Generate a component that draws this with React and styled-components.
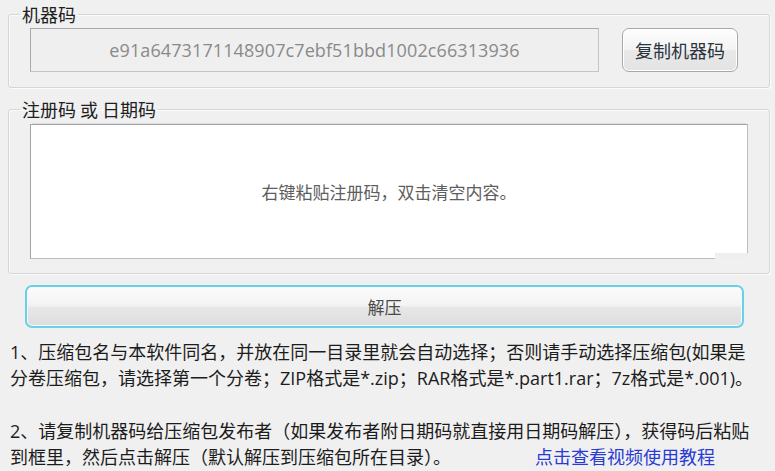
import React from "react";
import styled, { createGlobalStyle } from "styled-components";

const GlobalStyle = createGlobalStyle`
  html, body {
    margin: 0;
    padding: 0;
    background: #f0f0f0;
  }
  body {
    font-family: "Open Sans", "Noto Sans CJK SC", sans-serif;
    color: #1e1e1e;
  }
`;

const Page = styled.div`
  width: 775px;
  height: 471px;
  overflow: hidden;
  padding-top: 4px;
  box-sizing: border-box;
`;

const Group = styled.fieldset`
  margin: ${({ $top }) => $top || 0}px 5px 0 8px;
  padding: ${({ $pt }) => $pt}px 0 ${({ $pb }) => $pb}px 0;
  border: 1px solid #d4d6d8;
  border-radius: 3px;
  box-shadow: inset 1px 1px 0 #fbfbfb, 1px 1px 0 #fbfbfb;
  min-width: 0;
`;

const Legend = styled.legend`
  margin-left: 11px;
  padding: 0 2px;
  font-family: "Noto Sans CJK SC", sans-serif;
  font-size: 18px;
  line-height: 20px;
  color: #202020;
`;

const GroupBody = styled.div`
  padding-left: 21px;
`;

const CodeRow = styled.div`
  display: flex;
  align-items: center;
  gap: 23px;
`;

const CodeField = styled.div`
  width: 569px;
  height: 44px;
  box-sizing: border-box;
  border: 1px solid #a9a9a9;
  border-right-color: #c4c4c4;
  border-bottom-color: #c4c4c4;
  background: #efefef;
  display: flex;
  align-items: center;
  justify-content: center;
  font-family: "Open Sans", sans-serif;
  font-size: 18px;
  color: #8a8a8a;
  letter-spacing: 0.1px;
`;

const CopyButton = styled.button`
  width: 116px;
  height: 44px;
  border: 1px solid #a9a9a9;
  border-radius: 7px;
  background: linear-gradient(#fdfdfd 0%, #f3f3f3 50%, #e9e9e9 51%, #e3e3e3 100%);
  box-shadow: inset 0 0 0 1px #ffffff;
  font-family: "Noto Sans CJK SC", sans-serif;
  font-size: 18px;
  color: #2c3340;
  padding: 0;
`;

const PasteBox = styled.div`
  position: relative;
  width: 718px;
  height: 135px;
  box-sizing: border-box;
  background: #ffffff;
  border: 1px solid #a4a4a4;
  border-right-color: #bdbdbd;
  border-bottom-color: #bdbdbd;
  box-shadow: 0 -3px 0 -2px #d9dde0;
  display: flex;
  align-items: center;
  justify-content: center;
  font-family: "Noto Sans CJK SC", sans-serif;
  font-size: 17px;
  color: #5e5e5e;
`;

const Grip = styled.span`
  position: absolute;
  right: -1px;
  bottom: -1px;
  width: 33px;
  height: 6px;
  background: #efefef;
`;

const UnpackButton = styled.button`
  display: block;
  margin: 11px 0 0 25px;
  width: 719px;
  height: 43px;
  border: 2px solid #6ccfe8;
  border-radius: 7px;
  background: linear-gradient(#fbfbfb 0%, #f3f3f3 48%, #e7e7e7 52%, #dedede 100%);
  box-shadow: inset 0 0 0 1px #f7fdff;
  font-family: "Noto Sans CJK SC", sans-serif;
  font-size: 17px;
  color: #4a4a4a;
  padding: 0;
`;

const Notes = styled.div`
  margin: 12px 0 0 10px;
  font-family: "Open Sans", "Noto Sans CJK SC", sans-serif;
  font-size: 18px;
  line-height: 25.5px;
  color: #1c1c1c;
  white-space: nowrap;
`;

const Para = styled.p`
  margin: 0 0 ${({ $gap }) => $gap || 0}px;
`;

const VideoLink = styled.a`
  margin-left: 84px;
  color: #2a3bd4;
  text-decoration: none;
  cursor: pointer;
`;

export default function App() {
  return (
    <>
      <GlobalStyle />
      <Page>
        <Group $pt={4} $pb={15}>
          <Legend>机器码</Legend>
          <GroupBody>
            <CodeRow>
              <CodeField>e91a6473171148907c7ebf51bbd1002c66313936</CodeField>
              <CopyButton>复制机器码</CopyButton>
            </CodeRow>
          </GroupBody>
        </Group>
        <Group $top={11} $pt={5} $pb={14}>
          <Legend>注册码 或 日期码</Legend>
          <GroupBody>
            <PasteBox>
              右键粘贴注册码，双击清空内容。
              <Grip />
            </PasteBox>
          </GroupBody>
        </Group>
        <UnpackButton>解压</UnpackButton>
        <Notes>
          <Para $gap={28}>
            1、压缩包名与本软件同名，并放在同一目录里就会自动选择；否则请手动选择压缩包(如果是
            <br />
            分卷压缩包，请选择第一个分卷；ZIP格式是*.zip；RAR格式是*.part1.rar；7z格式是*.001)。
          </Para>
          <Para>
            2、请复制机器码给压缩包发布者（如果发布者附日期码就直接用日期码解压），获得码后粘贴
            <br />
            到框里，然后点击解压（默认解压到压缩包所在目录）。
            <VideoLink>点击查看视频使用教程</VideoLink>
          </Para>
        </Notes>
      </Page>
    </>
  );
}
